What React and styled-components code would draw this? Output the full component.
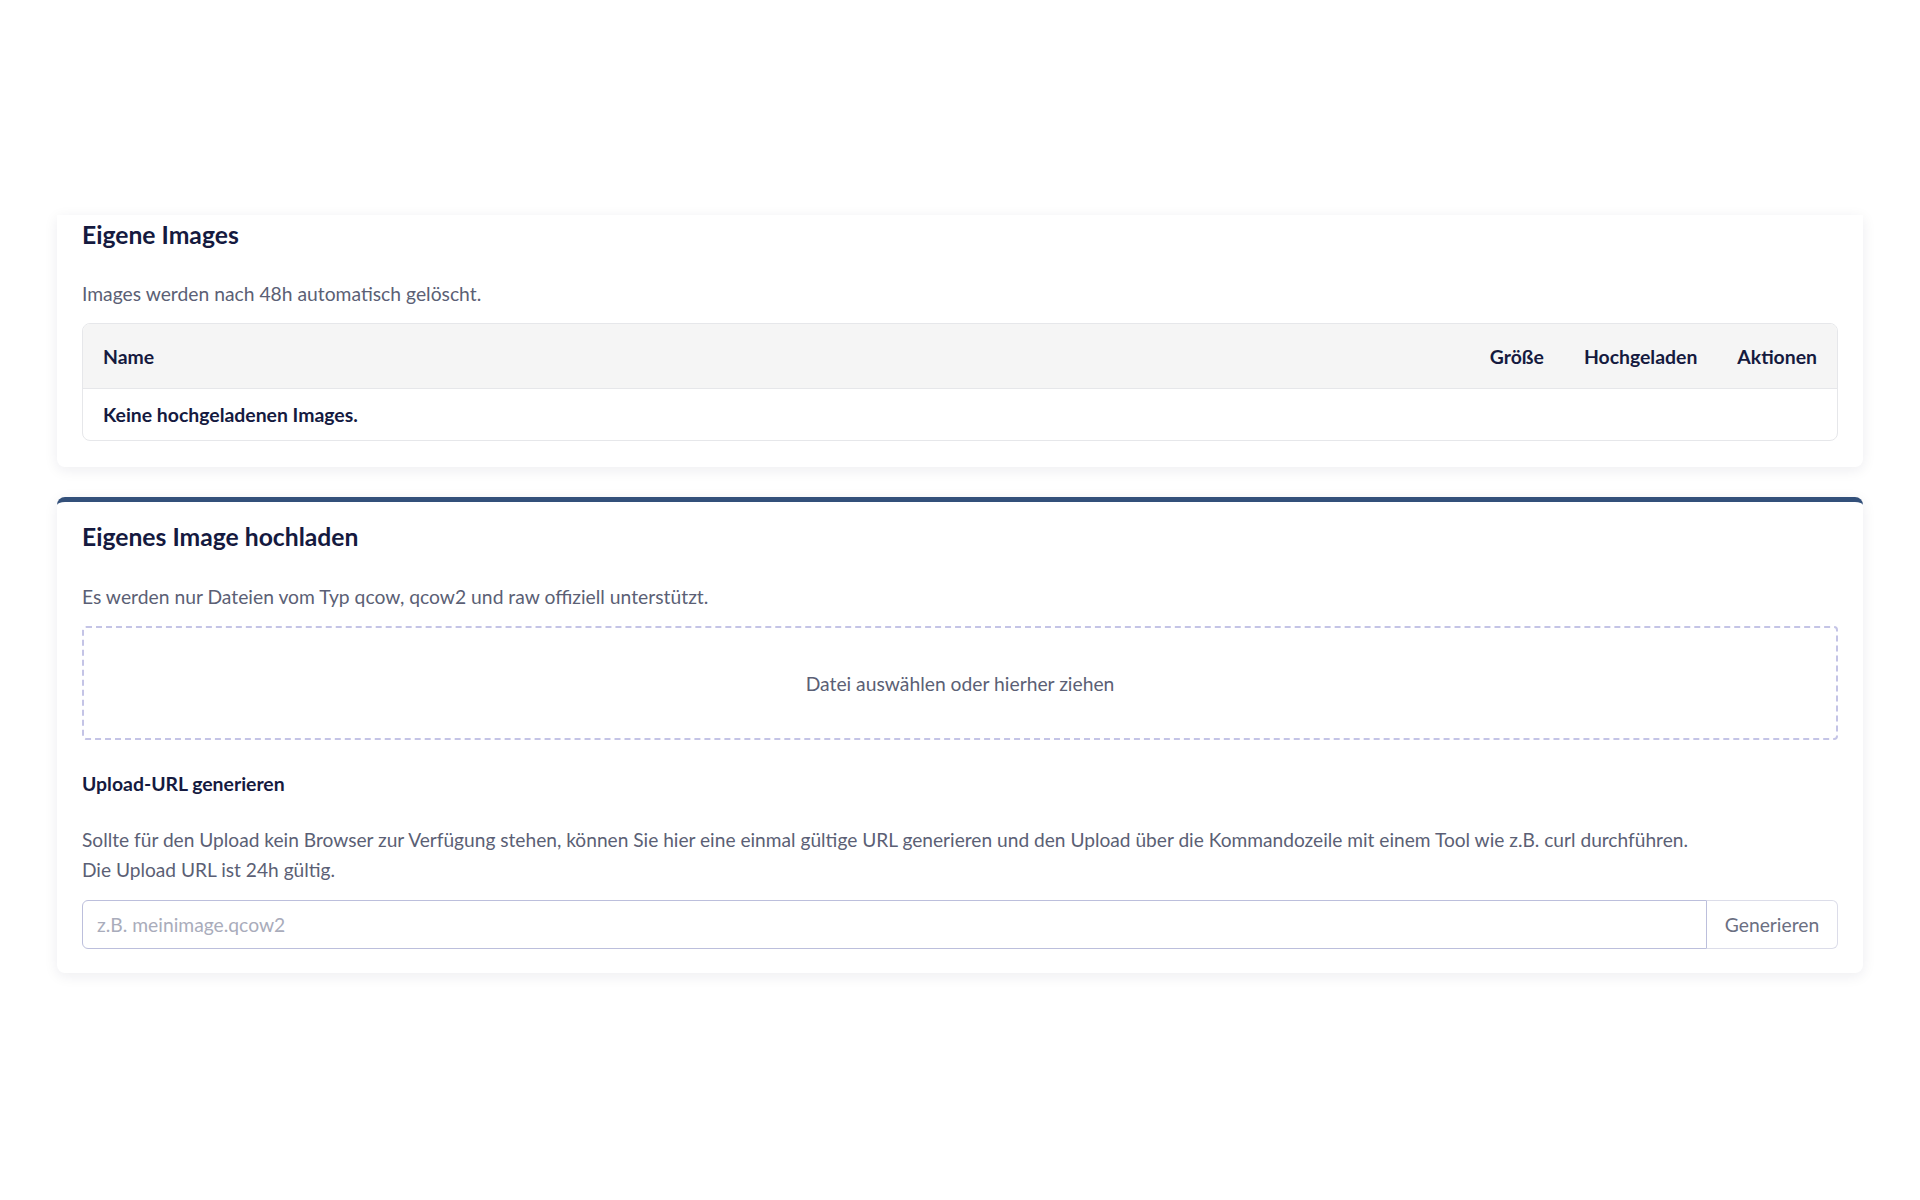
import React from 'react'
import styled, { createGlobalStyle } from 'styled-components'

const GlobalStyle = createGlobalStyle`
  body {
    margin: 0;
    background: #ffffff;
    font-family: Lato, "Noto Sans", sans-serif;
    color: #151a3f;
  }
`

const Page = styled.div`
  padding: 215px 57px 200px;
  display: flex;
  flex-direction: column;
  gap: 30px;
`

const Card = styled.section`
  background: #fff;
  box-shadow: 0 3px 14px rgba(20, 25, 60, 0.08);
  border-radius: ${p => (p.accent ? '8px' : '0 0 8px 8px')};
  border-top: ${p => (p.accent ? '5px solid #33507a' : 'none')};
  padding: ${p => (p.accent ? '20px 25px 24px' : '5px 25px 26px')};
`

const Title = styled.h2`
  margin: 0;
  font-size: 24.7px;
  line-height: 30px;
  font-weight: 700;
  color: #151a3f;
`

const Text = styled.p`
  margin: ${p => p.margin || '0'};
  font-size: ${p => p.size || '19.3px'};
  line-height: ${p => p.lh || '27px'};
  color: #5b5f75;
`

const SubTitle = styled.h3`
  margin: 30px 0 0;
  font-size: 19.4px;
  line-height: 27px;
  font-weight: 700;
  color: #151a3f;
`

const Table = styled.div`
  margin-top: 16px;
  border: 1px solid #e6e7ea;
  border-radius: 8px;
  overflow: hidden;
`

const HeadRow = styled.div`
  display: grid;
  grid-template-columns: 1fr auto auto auto;
  align-items: center;
  height: 64px;
  background: #f5f5f5;
  border-bottom: 1px solid #e6e7ea;
`

const HeadCell = styled.div`
  padding: 0 20px;
  font-size: 19.4px;
  font-weight: 700;
  color: #151a3f;
`

const EmptyRow = styled.div`
  height: 51px;
  display: flex;
  align-items: center;
  padding: 0 20px;
  font-size: 19.4px;
  font-weight: 700;
  color: #151a3f;
`

const DropZone = styled.div`
  margin-top: 16px;
  height: 110px;
  border: 2px dashed #c4c4e6;
  border-radius: 4px;
  display: flex;
  align-items: center;
  justify-content: center;
  font-size: 19.3px;
  color: #5b5f75;
  cursor: pointer;
`

const InputGroup = styled.div`
  margin-top: 15px;
  display: flex;
  height: 49px;
`

const Input = styled.input`
  flex: 1;
  box-sizing: border-box;
  height: 100%;
  border: 1px solid #bcbfdc;
  border-radius: 6px 0 0 6px;
  padding: 0 14px;
  font-family: inherit;
  font-size: 19.3px;
  color: #151a3f;
  outline: none;

  &::placeholder {
    color: #a9acbb;
  }
`

const Button = styled.button`
  width: 131px;
  height: 100%;
  box-sizing: border-box;
  background: #fff;
  border: 1px solid #dcdde9;
  border-left: none;
  border-radius: 0 6px 6px 0;
  font-family: inherit;
  font-size: 19.3px;
  color: #6b6f82;
  cursor: pointer;

  &:hover {
    background: #f7f7fb;
  }
`

const App = () => {
  return (
    <>
      <GlobalStyle />
      <Page>
        <Card>
          <Title>Eigene Images</Title>
          <Text margin="30px 0 0">Images werden nach 48h automatisch gelöscht.</Text>
          <Table>
            <HeadRow>
              <HeadCell>Name</HeadCell>
              <HeadCell>Größe</HeadCell>
              <HeadCell>Hochgeladen</HeadCell>
              <HeadCell>Aktionen</HeadCell>
            </HeadRow>
            <EmptyRow>Keine hochgeladenen Images.</EmptyRow>
          </Table>
        </Card>

        <Card accent>
          <Title>Eigenes Image hochladen</Title>
          <Text margin="31px 0 0">
            Es werden nur Dateien vom Typ qcow, qcow2 und raw offiziell unterstützt.
          </Text>
          <DropZone>Datei auswählen oder hierher ziehen</DropZone>

          <SubTitle>Upload-URL generieren</SubTitle>
          <Text margin="28px 0 0" lh="30px" size="19.15px">
            Sollte für den Upload kein Browser zur Verfügung stehen, können Sie hier eine einmal gültige URL generieren und den Upload über die Kommandozeile mit einem Tool wie z.B. curl durchführen.
            <br />
            Die Upload URL ist 24h gültig.
          </Text>
          <InputGroup>
            <Input placeholder="z.B. meinimage.qcow2" />
            <Button>Generieren</Button>
          </InputGroup>
        </Card>
      </Page>
    </>
  )
}

export default App
